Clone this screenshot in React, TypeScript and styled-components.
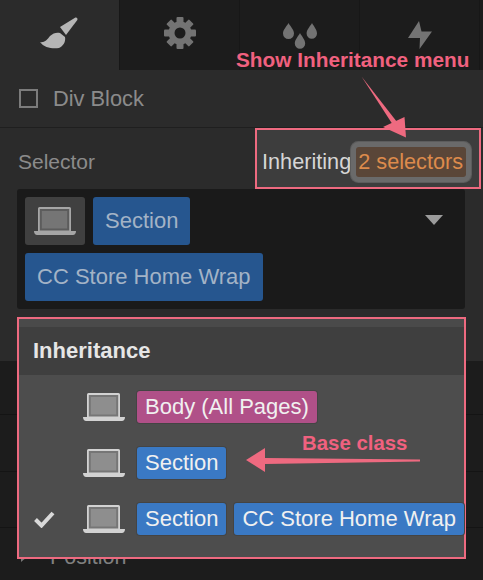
import styled, { createGlobalStyle } from "styled-components";

const GlobalStyle = createGlobalStyle`
html, body {
  margin: 0;
  padding: 0;
  background: #1c1c1c;
}
body {
  font-family: "Liberation Sans", Arial, sans-serif;
}
`;

const Laptop = ({ light }: { light?: boolean }) => (
  <LaptopSvg viewBox="0 0 42 28" $light={light}>
    <path d="M5.500 0h30a1.500 1.500 0 0 1 1.500 1.500V24H4V1.500A1.500 1.500 0 0 1 5.500 0z" fill="currentColor" />
    <rect x="5.800" y="2" width="29.400" height="21.500" fill={light ? "#767676" : "#5c5c5c"} />
    <rect x="7.800" y="4" width="25.400" height="17.500" fill={light ? "#8e8e8e" : "#757575"} />
    <path d="M0 24h42c0 2.500-1.500 4-3 4H3c-1.500 0-3-1.500-3-4z" fill="currentColor" />
  </LaptopSvg>
);

const teeth = [0, 45, 90, 135];

const App = () => {
  return (
    <Page>
      <GlobalStyle />
      <Tabs>
        <Tab $active>
          <svg width="40" height="32" viewBox="0 0 40 32">
            <path d="M20 10L35 .8c1.500-.8 3 .5 2.300 2.200L26 18z" fill="#b5b5b5" />
            <path d="M0 25c4 1 7-2 10-6 3-3 7-4 10-3l5 4c1 5-2 9-6 11-6 1-15 0-19-6z" fill="#b5b5b5" />
          </svg>
        </Tab>
        <Tab>
          <svg width="32" height="32" viewBox="0 0 32 32">
            {teeth.map((deg) => (
              <rect key={deg} x="12.500" y="0" width="7" height="32" rx="1" fill="#737373" transform={`rotate(${deg} 16 16)`} />
            ))}
            <circle cx="16" cy="16" r="11.500" fill="#737373" />
            <circle cx="16" cy="16" r="5.500" fill="#1c1c1c" />
          </svg>
        </Tab>
        <Tab>
          <DropIcon width="34" height="27" viewBox="0 0 34 27">
            <path d="M5.500 0c1.500 3 5.500 6.500 5.500 10.500a5.500 5.500 0 0 1-11 0C0 6.500 4 3 5.500 0z" fill="#737373" />
            <path d="M29 0c1.500 3 5 6.500 5 10.500a5.200 5.200 0 0 1-10.400 0C23.600 6.500 27.500 3 29 0z" fill="#737373" />
            <path d="M17 10c1.500 3 5.200 6.500 5.200 10.500a5.200 5.200 0 0 1-10.400 0c0-4 3.700-7.500 5.200-10.500z" fill="#737373" />
          </DropIcon>
        </Tab>
        <Tab>
          <BoltIcon width="24" height="28" viewBox="0 0 24 28">
            <path d="M11 0L0 17h12l-.5 11L24 10.500H13.500z" fill="#737373" />
          </BoltIcon>
        </Tab>
        <Callout>Show Inheritance menu</Callout>
      </Tabs>

      <ElementRow>
        <CheckBox />
        <ElementName>Div Block</ElementName>
      </ElementRow>

      <SelectorRow>
        <SelectorLabel>Selector</SelectorLabel>
        <InheritBox>
          <InheritText>Inheriting</InheritText>
          <InheritBadge>2 selectors</InheritBadge>
        </InheritBox>
      </SelectorRow>

      <FieldWrap>
        <SelectorField>
          <TokenRow>
            <DeviceToken>
              <Laptop />
            </DeviceToken>
            <DimToken>Section</DimToken>
            <Caret />
          </TokenRow>
          <TokenRow>
            <DimToken>CC Store Home Wrap</DimToken>
          </TokenRow>
        </SelectorField>
      </FieldWrap>

      <SectionRow $height={54} />
      <SectionRow $height={57} />
      <SectionRow $height={56} />
      <PositionRow>
        <RowCaret />
        <PositionLabel>Position</PositionLabel>
      </PositionRow>

      <Menu>
        <MenuTitle>Inheritance</MenuTitle>
        <MenuBody>
          <MenuRow>
            <CheckSlot />
            <Laptop light />
            <Chip $color="#b05088">Body (All Pages)</Chip>
          </MenuRow>
          <MenuRow>
            <CheckSlot />
            <Laptop light />
            <Chip $color="#3a79c4">Section</Chip>
          </MenuRow>
          <MenuRow>
            <CheckSlot>
              <svg width="21" height="17" viewBox="0 0 21 17">
                <path d="M1.500 8.500l6 6L19 2" fill="none" stroke="#d9d9d9" strokeWidth="4" />
              </svg>
            </CheckSlot>
            <Laptop light />
            <Chip $color="#3a79c4">Section</Chip>
            <Chip $color="#3a79c4">CC Store Home Wrap</Chip>
          </MenuRow>
        </MenuBody>
      </Menu>

      {/* annotations on top of the screenshot */}
      <ArrowLayer viewBox="0 0 483 580">
        <path d="M361.500 76.500L393 125l4-3z" fill="#ee6a80" />
        <path d="M404.500 117l1.500 20.500-23-10.500z" fill="#ee6a80" />
        <path d="M420 459.500v2L265 464v-6z" fill="#ee6a80" />
        <path d="M246 460l19-12v24z" fill="#ee6a80" />
      </ArrowLayer>
      <BaseClassNote>Base class</BaseClassNote>
    </Page>
  );
};
export default App;

const Page = styled.div`
position: relative;
width: 483px;
height: 580px;
overflow: hidden;
background: #1c1c1c;
display: flex;
flex-direction: column;
`;
const Tabs = styled.div`
position: relative;
display: flex;
height: 70px;
background: #1c1c1c;
flex-shrink: 0;
`;
const Tab = styled.div<{ $active?: boolean }>`
width: 120px;
height: 70px;
display: flex;
justify-content: center;
padding-top: 17px;
box-sizing: border-box;
background: ${(p) => (p.$active ? "#2b2b2b" : "#1c1c1c")};
border-right: 1px solid #171717;
`;
const DropIcon = styled.svg`
margin-top: 6px;
`;
const BoltIcon = styled.svg`
margin-top: 4px;
`;
const Callout = styled.div`
position: absolute;
left: 236px;
top: 48px;
color: #f0617f;
font-size: 20.800px;
font-weight: 700;
white-space: nowrap;
`;
const ElementRow = styled.div`
height: 57px;
display: flex;
align-items: center;
padding-left: 19px;
background: #2b2b2b;
border-bottom: 1px solid #1f1f1f;
flex-shrink: 0;
`;
const CheckBox = styled.div`
width: 15px;
height: 15px;
border: 2px solid #7c7c7c;
`;
const ElementName = styled.div`
margin-left: 15px;
color: #8b8b8b;
font-size: 21.800px;
`;
const SelectorRow = styled.div`
height: 61px;
display: flex;
align-items: stretch;
justify-content: space-between;
padding-left: 18px;
padding-right: 2px;
background: #2b2b2b;
flex-shrink: 0;
`;
const SelectorLabel = styled.div`
color: #8b8b8b;
font-size: 21px;
line-height: 68px;
`;
const InheritBox = styled.div`
width: 226px;
box-sizing: border-box;
border: 2px solid #ee6a80;
background: #3d3d3d;
display: flex;
align-items: center;
padding-left: 5px;
padding-top: 7px;
`;
const InheritText = styled.div`
color: #d6d6d6;
font-size: 21.700px;
white-space: nowrap;
`;
const InheritBadge = styled.div`
margin-left: 5px;
height: 30px;
line-height: 30px;
padding: 0 3px 0 2px;
color: #dd8b4c;
background: #5a4638;
font-size: 21.700px;
white-space: nowrap;
border-radius: 3px;
box-shadow: 0 0 0 5px #6a6a6a, 0 0 0 6px #5c5c5c;
`;
const FieldWrap = styled.div`
padding: 0 18px 52px 17px;
background: #2b2b2b;
flex-shrink: 0;
`;
const SelectorField = styled.div`
height: 120px;
box-sizing: border-box;
padding: 8px;
background: #1a1a1a;
border-radius: 3px;
display: flex;
flex-direction: column;
gap: 8px;
`;
const TokenRow = styled.div`
display: flex;
align-items: center;
gap: 8px;
position: relative;
`;
const DeviceToken = styled.div`
width: 60px;
height: 48px;
background: #404040;
border-radius: 3px;
color: #a6a6a6;
display: flex;
align-items: center;
justify-content: center;
`;
const DimToken = styled.div`
height: 48px;
padding: 0 12px;
display: flex;
align-items: center;
background: #26568f;
color: #a3b3c6;
border-radius: 3px;
font-size: 22px;
white-space: nowrap;
`;
const Caret = styled.div`
position: absolute;
right: 14px;
top: 18px;
width: 0;
height: 0;
border-left: 9px solid transparent;
border-right: 9px solid transparent;
border-top: 10px solid #9c9c9c;
`;
const SectionRow = styled.div<{ $height: number }>`
height: ${(p) => p.$height}px;
box-sizing: border-box;
background: #1c1c1c;
border-bottom: 1px solid #141414;
flex-shrink: 0;
`;
const PositionRow = styled.div`
display: flex;
align-items: center;
height: 58px;
padding-left: 21px;
flex-shrink: 0;
`;
const RowCaret = styled.div`
width: 0;
height: 0;
border-top: 5px solid transparent;
border-bottom: 5px solid transparent;
border-left: 6px solid #777;
`;
const PositionLabel = styled.div`
margin-left: 23px;
color: #808080;
font-size: 21.500px;
`;
const Menu = styled.div`
position: absolute;
left: 17px;
top: 317px;
width: 449px;
height: 242px;
box-sizing: border-box;
border: 2px solid #ee6a80;
background: #4d4d4d;
display: flex;
flex-direction: column;
`;
const MenuTitle = styled.div`
height: 56px;
box-sizing: border-box;
padding-left: 14px;
background: #3f3f3f;
border-top: 8px solid #4a4a4a;
color: #e6e6e6;
font-size: 22px;
font-weight: 700;
line-height: 48px;
flex-shrink: 0;
`;
const MenuBody = styled.div`
padding-top: 16px;
display: flex;
flex-direction: column;
gap: 24px;
`;
const MenuRow = styled.div`
display: flex;
align-items: center;
gap: 8px;
height: 32px;
`;
const CheckSlot = styled.div`
width: 56px;
height: 32px;
box-sizing: border-box;
padding-left: 15px;
display: flex;
align-items: center;
flex-shrink: 0;
`;
const LaptopSvg = styled.svg<{ $light?: boolean }>`
width: 42px;
height: 28px;
flex-shrink: 0;
color: ${(p) => (p.$light ? "#d2d2d2" : "#a6a6a6")};
margin-right: ${(p) => (p.$light ? "4px" : "0")};
`;
const Chip = styled.div<{ $color: string }>`
height: 32px;
padding: 0 8px;
display: flex;
align-items: center;
background: ${(p) => p.$color};
color: #f0f0f0;
border-radius: 3px;
box-shadow: 0 0 0 1px #444;
font-size: 22px;
white-space: nowrap;
`;
const ArrowLayer = styled.svg`
position: absolute;
left: 0;
top: 0;
width: 483px;
height: 580px;
pointer-events: none;
`;
const BaseClassNote = styled.div`
position: absolute;
left: 302px;
top: 432px;
color: #f0617f;
font-size: 20.400px;
font-weight: 700;
white-space: nowrap;
`;
